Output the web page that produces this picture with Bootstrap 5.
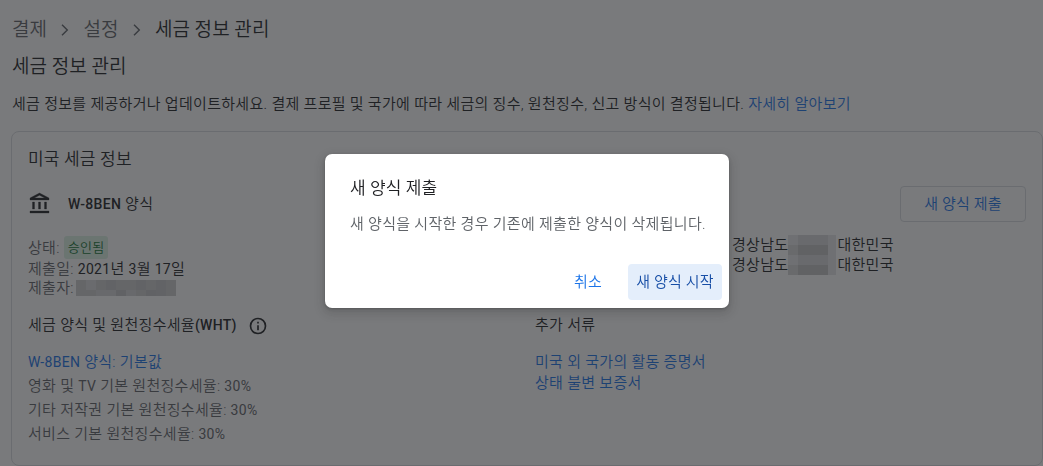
<!DOCTYPE html>
<html lang="ko">
<head>
  <meta charset="UTF-8" />
  <meta name="viewport" content="width=device-width, initial-scale=1.0"/>
  <title>세금 정보 관리</title>
  <link href="https://cdn.jsdelivr.net/npm/bootstrap@5.3.0/dist/css/bootstrap.min.css" rel="stylesheet"/>
  <style>
    body {
      font-family: Roboto, "Noto Sans CJK KR", sans-serif;
      font-size: 15px;
      font-weight: 350;
      line-height: 20px;
      letter-spacing: .3px;
      color: #202124;
      overflow: hidden;
    }
    a { color: #1a73e8; text-decoration: none; }
    .text-gray { color: #5f6368; }
    .latin { font-size: 14px; font-weight: 400; }
    .fw-latin { font-weight: 500; }

    .crumbs { height: 36px; margin-top: 12px; font-size: 19px; letter-spacing: .05px; }
    .crumbs svg { margin: 0 6.2px; }
    .page-title { height: 36px; font-size: 19px; line-height: 38px; letter-spacing: .05px; font-weight: 350; }
    .page-desc { height: 40px; line-height: 40px; margin-bottom: 7px; }

    .tax-card { height: 335px; margin-left: 11px; padding: 17px 16px 0; border: 1px solid #dadce0; border-radius: 8px; }
    .tax-title { font-size: 17px; line-height: 21px; letter-spacing: .2px; font-weight: 350; }
    .form-row { height: 36px; margin-top: 16px; }
    .form-row svg { margin-right: 16px; }
    .btn-outline-new { width: 126px; height: 36px; padding: 0; border: 1px solid #dadce0; border-radius: 4px; color: #1a73e8; font-size: 15px; font-weight: 350; letter-spacing: .2px; }
    .status-row { height: 78px; margin-top: 14px; }
    .status-badge { height: 23px; padding: 0 4px; border-radius: 3px; background: #dcf2e4; color: #137333; font-size: 13px; line-height: 23px; }
    .submitter { margin-top: -1px; }
    .submitter svg { margin-left: 2px; }
    .half { width: 507px; }
    .rates-title { height: 22px; }
    .rates-title svg { margin-left: 11px; margin-top: 2px; }
    .rate-list { margin-top: 14px; line-height: 24px; }
    .doc-list { margin-top: 16px; line-height: 21px; }
    .rates-title-plain { line-height: 22px; }
    .address { margin-left: 197px; margin-top: -1px; line-height: 20px; }
    .address .mosaic { width: 49px; height: 20px; }

    .modal-backdrop.scrim { --bs-backdrop-bg: #202124; --bs-backdrop-opacity: .6; }
    .confirm { width: 404px; max-width: none; margin: 154px 0 0 325px; }
    .confirm .modal-content { height: 154px; border: 0; border-radius: 7px; box-shadow: 0 1px 3px rgba(32,33,36,.3), 0 4px 8px 3px rgba(32,33,36,.15); }
    .confirm-title { padding: 24px 25px 0; color: #202124; font-size: 17px; line-height: 21px; letter-spacing: .1px; font-weight: 350; }
    .confirm-text { padding: 15px 25px 0; }
    .confirm-actions { padding: 8px 7px 8px 8px; gap: 18px; }
    .confirm .btn { height: 36px; padding: 1px 8px 0; border: 0; border-radius: 4px; font-size: 15px; font-weight: 350; letter-spacing: .2px; }
    .confirm .btn-cancel { color: #1a73e8; }
    .confirm .btn-start { width: 94px; background: #e4eefb; color: #174ea6; }
  </style>
</head>
<body>

  <nav class="crumbs d-flex align-items-center ps-2 ms-1">
    <span class="text-gray">결제</span>
    <svg width="24" height="24" viewBox="0 0 24 24" fill="none" stroke="#5f6368" stroke-width="1.4"><path d="m9 6.7 5.3 5.3L9 17.3"/></svg>
    <span class="text-gray">설정</span>
    <svg width="24" height="24" viewBox="0 0 24 24" fill="none" stroke="#5f6368" stroke-width="1.4"><path d="m9 6.7 5.3 5.3L9 17.3"/></svg>
    <span>세금 정보 관리</span>
  </nav>
  <h1 class="page-title ps-2 ms-1 mb-0">세금 정보 관리</h1>
  <p class="page-desc ps-2 ms-1 text-nowrap">세금 정보를 제공하거나 업데이트하세요. 결제 프로필 및 국가에 따라 세금의 징수, 원천징수, 신고 방식이 결정됩니다. <a href="#">자세히 알아보기</a></p>

  <section class="tax-card">
    <h2 class="tax-title text-gray-dark mb-0">미국 세금 정보</h2>

    <div class="form-row d-flex align-items-center">
      <svg width="24" height="24" viewBox="0 0 24 24" fill="#202124" stroke="#202124" stroke-width=".3"><path d="M6.5 10h-2v7h2v-7zm6 0h-2v7h2v-7zm8.5 9H2v2h19v-2zm-2.5-9h-2v7h2v-7zm-7-6.74L16.71 6H6.29l5.21-2.74m0-2.26L2 6v2h19V6l-9.5-5z"/></svg>
      <span><span class="latin fw-latin">W-8BEN</span> 양식</span>
      <button class="btn btn-outline-new ms-auto">새 양식 제출</button>
    </div>

    <div class="status-row d-flex">
      <div class="half">
        <div class="d-flex align-items-center"><span class="text-gray me-1">상태:</span><span class="status-badge">승인됨</span></div>
        <div><span class="text-gray">제출일:</span> <span class="latin">2021</span>년 <span class="latin">3</span>월 <span class="latin">17</span>일</div>
        <div class="submitter d-flex align-items-center"><span class="text-gray">제출자:</span>
          <svg width="100" height="16">
            <rect width="100" height="16" fill="#cdcdce"/>
            <path fill="#dadadc" d="M10 0h10v10H10z"/>
            <path fill="#c6c6c8" d="M30 0h10v10H30zM60 0h10v10H60zM80 0h10v16H80z"/>
            <path fill="#d4d4d6" d="M20 10h20v6H20zM50 10h10v6H50z"/>
            <path fill="#c3c3c5" d="M40 10h10v6H40zM70 10h10v6H70z"/>
          </svg>
        </div>
      </div>
      <div class="address">
        <div class="d-flex">경상남도<svg class="mosaic"><path fill="#e6e6e8" d="M0 0h48v20H0z"/><path fill="#d8d8da" d="M10 0h30v10H10z"/><path fill="#d6d6d8" d="M0 10h10v10H0z"/><path fill="#c2c2c4" d="M10 10h30v10H10z"/></svg>대한민국</div>
        <div class="d-flex">경상남도<svg class="mosaic"><path fill="#e6e6e8" d="M0 0h48v20H0z"/><path fill="#d8d8da" d="M10 0h30v10H10z"/><path fill="#d6d6d8" d="M0 10h10v10H0z"/><path fill="#c2c2c4" d="M10 10h30v10H10z"/></svg>대한민국</div>
      </div>
    </div>

    <div class="d-flex">
      <div class="half">
        <div class="rates-title d-flex align-items-center">
          <span>세금 양식 및 원천징수세율<span class="latin fw-latin">(WHT)</span></span>
          <svg width="20" height="20" viewBox="0 0 24 24" fill="#202124"><path d="M11 7h2v2h-2zm0 4h2v6h-2zm1-9a10 10 0 1 0 0 20 10 10 0 0 0 0-20zm0 18a8 8 0 1 1 0-16 8 8 0 0 1 0 16z"/></svg>
        </div>
        <div class="rate-list text-gray">
          <div><a href="#"><span class="latin">W-8BEN</span> 양식: 기본값</a></div>
          <div>영화 및 <span class="latin">TV</span> 기본 원천징수세율: <span class="latin">30%</span></div>
          <div>기타 저작권 기본 원천징수세율: <span class="latin">30%</span></div>
          <div>서비스 기본 원천징수세율: <span class="latin">30%</span></div>
        </div>
      </div>
      <div>
        <div class="rates-title rates-title-plain">추가 서류</div>
        <div class="doc-list">
          <div><a href="#">미국 외 국가의 활동 증명서</a></div>
          <div><a href="#">상태 불변 보증서</a></div>
        </div>
      </div>
    </div>
  </section>

  <div class="modal-backdrop scrim show"></div>
  <div class="modal d-block" tabindex="-1" role="dialog">
    <div class="modal-dialog confirm">
      <div class="modal-content">
        <h3 class="confirm-title mb-0">새 양식 제출</h3>
        <p class="confirm-text text-gray text-nowrap mb-0">새 양식을 시작한 경우 기존에 제출한 양식이 삭제됩니다.</p>
        <div class="confirm-actions d-flex justify-content-end mt-auto">
          <button class="btn btn-cancel">취소</button>
          <button class="btn btn-start">새 양식 시작</button>
        </div>
      </div>
    </div>
  </div>

  <script src="https://cdn.jsdelivr.net/npm/bootstrap@5.3.0/dist/js/bootstrap.bundle.min.js"></script>
</body>
</html>
